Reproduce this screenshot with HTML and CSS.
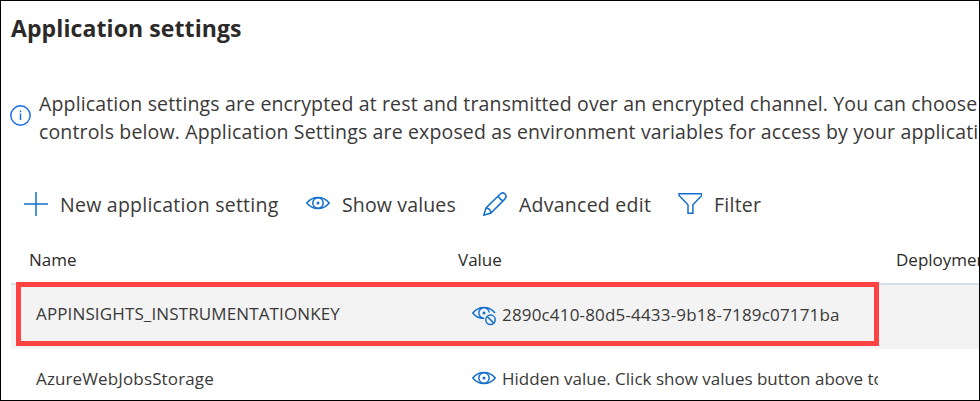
FILE: index.html
```html
<!DOCTYPE html>
<html lang="en">
<head>
<meta charset="utf-8">
<title>Application settings</title>
<link rel="stylesheet" href="styles.css">
</head>
<body>
<svg class="defs" aria-hidden="true">
  <symbol id="eye" viewBox="0 0 24 14">
    <path d="M.8 7C4 3 8 1.5 12 1.5S20 3 23.2 7C20 11 16 12.5 12 12.5S4 11 .8 7Z"/>
    <circle cx="12" cy="7" r="5.2"/>
    <circle class="dot" cx="12" cy="7" r="1.5"/>
  </symbol>
</svg>
<main class="panel">
  <h1 class="title">Application settings</h1>
  <section class="info">
    <svg class="info-icon" viewBox="0 0 20 20"><circle cx="10" cy="10" r="9.2"/><path d="M10 8.2V14.2M10 5.2V6.8"/></svg>
    <p class="info-text">Application settings are encrypted at rest and transmitted over an encrypted channel. You can choose<br>controls below. Application Settings are exposed as environment variables for access by your application</p>
  </section>
  <nav class="toolbar">
    <a class="cmd cmd-new"><svg class="icon plus" viewBox="0 0 24 24"><path d="M12 0V24M0 12H24"/></svg><span>New application setting</span></a>
    <a class="cmd cmd-show"><svg class="icon eye"><use href="#eye"/></svg><span>Show values</span></a>
    <a class="cmd cmd-edit"><svg class="icon" viewBox="0 0 24 24"><path d="M.8 23.2L3 16L17 2.2C18.5 .7 20.5 .5 22 2S23.3 5.6 21.8 7.1L8 21Z M3 16C5.6 16.2 7.5 18.2 8 21 M15 4.2C16.5 6.7 17.7 7.9 20 9"/></svg><span>Advanced edit</span></a>
    <a class="cmd cmd-filter"><svg class="icon" viewBox="0 0 24 24"><path d="M1 1.7H23.8V3.5L14.9 12.7V21.3H10V12.7L1 3.5Z"/></svg><span>Filter</span></a>
  </nav>
  <section class="table">
    <div class="row head"><span>Name</span><span>Value</span><span>Deployment slot setting</span></div>
    <div class="row item selected"><span class="name">APPINSIGHTS_INSTRUMENTATIONKEY</span>
      <span class="value guid"><svg class="icon hide" viewBox="0 0 24 20"><path d="M23 7C20 3 16 1.5 12 1.5S4 3 .8 7C3.7 10.7 7.5 12.3 11.5 12.5M12.2 12.2A5.2 5.2 0 1 1 17.2 6.5"/><circle class="dot" cx="12" cy="7" r="1.5"/><circle cx="18.5" cy="13.8" r="4.7"/><path d="M15.2 10.5L21.8 17.1"/></svg><span>2890c410-80d5-4433-9b18-7189c07171ba</span></span></div>
    <div class="row item"><span class="name">AzureWebJobsStorage</span>
      <span class="value"><svg class="icon eye"><use href="#eye"/></svg><span>Hidden value. Click show values button above to view</span></span></div>
    <div class="highlight"></div>
  </section>
</main>
</body>
</html>
```
FILE: styles.css
```css
* { box-sizing: border-box; }
body { margin: 0; background: #fff; color: #3a3938; font-family: "Open Sans", "Noto Sans", sans-serif; }
.defs { position: absolute; width: 0; height: 0; }
.panel { width: 980px; height: 401px; border: 1px solid #000; overflow: hidden; }
.title { margin: 0; padding: 11px 0 0 10px; height: 89px; font-size: 23px; letter-spacing: .1px; line-height: 32px; font-weight: 700; color: #2b2a29; }
.info { display: flex; gap: 8px; padding-left: 9px; height: 94px; white-space: nowrap; }
.info-icon { width: 21px; height: 21px; margin-top: 15px; flex: none; fill: none; stroke: #1a6ee8; stroke-width: 1.4; }
.info-text { margin: 0; font-size: 19.5px; letter-spacing: .15px; line-height: 28px; }
.toolbar { display: flex; height: 40px; padding-left: 23px; font-size: 19.5px; letter-spacing: .25px; white-space: nowrap; }
.cmd { display: flex; align-items: center; gap: 12px; height: 40px; }
.cmd-new { width: 282px; }
.cmd-show { width: 177px; letter-spacing: .15px; }
.cmd-edit { width: 195px; }
.icon { width: 24px; height: 24px; flex: none; fill: none; stroke: #1470cc; stroke-width: 1.5; }
.icon.eye { height: 14px; margin-bottom: 3px; }
.icon.hide { height: 20px; margin-top: 4px; }
.dot { fill: #1470cc; stroke: none; }
.table { position: relative; margin-left: 10px; font-size: 17px; white-space: nowrap; }
.row { display: grid; grid-template-columns: 429px 438px 1fr; }
.head { height: 61px; padding: 24px 0 0 18px; line-height: 24px; border-bottom: 2px solid #d5dfe6; color: #2c2b2a; }
.item { height: 64px; align-items: center; grid-template-columns: 436px 406px; padding: 0 0 6px 25px; }
.selected { background: #f3f3f3; }
.name { letter-spacing: .13px; }
.selected .name { padding-bottom: 2px; }
.value { display: flex; align-items: center; gap: 6px; overflow: hidden; }
.value .eye { margin-bottom: 1px; }
.guid { letter-spacing: .17px; }
.highlight { position: absolute; left: 5px; top: 58px; width: 863px; height: 64px; border: 5px solid #ff4343; }
```
